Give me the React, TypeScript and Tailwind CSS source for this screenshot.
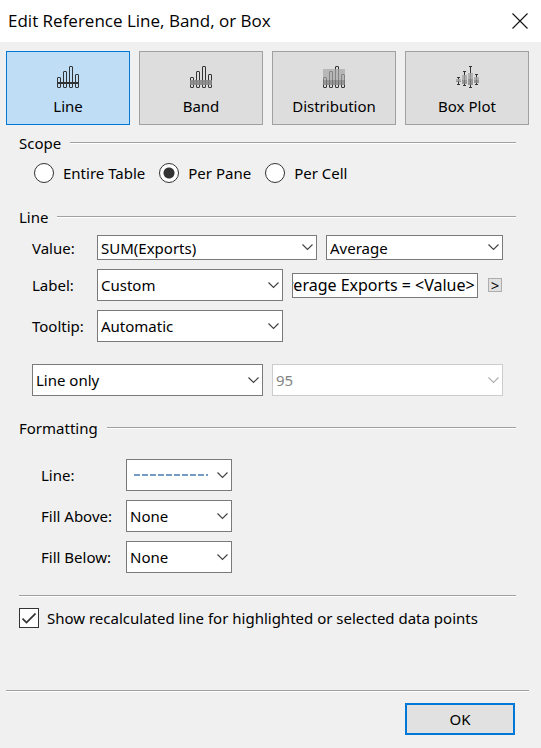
import { useEffect, useRef, useState } from "react";
import type { ReactNode } from "react";

const BARS = [
  { x: 0, top: 11 },
  { x: 6, top: 5 },
  { x: 12, top: 0 },
  { x: 18, top: 8 },
];

function Bars() {
  return (
    <>
      {BARS.map((b) => (
        <rect
          key={b.x}
          x={b.x + 0.5}
          y={b.top + 0.5}
          width="3"
          height={21 - b.top}
          rx="0.5"
          fill="none"
          stroke="#333"
        />
      ))}
    </>
  );
}

function LineIcon() {
  return (
    <svg width="22" height="22" viewBox="0 0 22 22" aria-hidden="true">
      <Bars />
      <rect x="0" y="16" width="22" height="2" fill="#333" />
    </svg>
  );
}

function BandIcon() {
  return (
    <svg width="22" height="22" viewBox="0 0 22 22" aria-hidden="true">
      <Bars />
      <rect x="0" y="14" width="22" height="5" fill="#868686" fillOpacity="0.88" />
    </svg>
  );
}

function DistributionIcon() {
  return (
    <svg width="22" height="22" viewBox="0 0 22 22" aria-hidden="true">
      <Bars />
      <rect x="0" y="3" width="22" height="11" fill="#a6a6a6" fillOpacity="0.7" />
      <rect x="0" y="14" width="22" height="5" fill="#868686" fillOpacity="0.8" />
    </svg>
  );
}

const BOXES = [
  { x: 0, top: 11, bottom: 19, boxTop: 13, mid: 15, boxBottom: 16 },
  { x: 6, top: 5, bottom: 20, boxTop: 9, mid: 14, boxBottom: 18 },
  { x: 12, top: 0, bottom: 22, boxTop: 7, mid: 13, boxBottom: 19 },
  { x: 18, top: 8, bottom: 19, boxTop: 11, mid: 14, boxBottom: 17 },
];

function BoxPlotIcon() {
  return (
    <svg width="23" height="22" viewBox="0 0 23 22" aria-hidden="true">
      {BOXES.map((b) => (
        <g key={b.x}>
          <rect x={b.x + 2} y={b.top} width="1" height={b.bottom - b.top} fill="#333" />
          <rect x={b.x} y={b.boxTop} width="5" height={b.mid - b.boxTop} fill="#a6a6a6" fillOpacity="0.8" />
          <rect x={b.x} y={b.mid} width="5" height={b.boxBottom - b.mid} fill="#868686" fillOpacity="0.8" />
          <rect x={b.x + 1} y={b.top} width="3" height="1" fill="#333" />
          <rect x={b.x + 1} y={b.bottom - 1} width="3" height="1" fill="#333" />
        </g>
      ))}
    </svg>
  );
}

const TABS = [
  { name: "Line", icon: <LineIcon /> },
  { name: "Band", icon: <BandIcon /> },
  { name: "Distribution", icon: <DistributionIcon /> },
  { name: "Box Plot", icon: <BoxPlotIcon /> },
];

function Rule() {
  return <div className="h-[2px] flex-1 border-t border-[#a0a0a0] bg-white" />;
}

function SectionTitle({ children }: { children: ReactNode }) {
  return (
    <div className="flex h-5 items-center gap-[9px]">
      <h2>{children}</h2>
      <Rule />
    </div>
  );
}

type SelectProps = {
  id?: string;
  label?: string;
  options: string[];
  short?: boolean;
  disabled?: boolean;
  dashed?: boolean;
};

function Select({ id, label, options, short, disabled, dashed }: SelectProps) {
  return (
    <div className="relative min-w-0">
      <select
        id={id}
        aria-label={label}
        disabled={disabled}
        className={`block w-full appearance-none rounded-none border bg-white pr-5 pl-[3px] opacity-100 outline-none ${
          short ? "h-[25px]" : "h-8"
        } ${disabled ? "border-[#cccccc] text-[#838383]" : "border-[#7a7a7a]"} ${
          dashed ? "text-transparent" : ""
        }`}
      >
        {options.map((o) => (
          <option key={o}>{o}</option>
        ))}
      </select>
      {dashed && (
        <svg
          className="pointer-events-none absolute top-[15px] left-2"
          width="74"
          height="2"
          viewBox="0 0 74 2"
          aria-hidden="true"
        >
          <path d="M0 1H74" stroke="#759cc4" strokeWidth="2" strokeDasharray="6 2" />
        </svg>
      )}
      <svg
        className="pointer-events-none absolute inset-y-0 right-1 my-auto"
        width="11"
        height="7"
        viewBox="0 0 11 7"
        fill="none"
        stroke={disabled ? "#b0b0b0" : "#444"}
        strokeWidth="1.2"
        aria-hidden="true"
      >
        <path d="M0.5 0.5L5.5 5.5L10.5 0.5" />
      </svg>
    </div>
  );
}

const SCOPES = ["Entire Table", "Per Pane", "Per Cell"];

export default function App() {
  const [tab, setTab] = useState("Line");
  const labelText = useRef<HTMLInputElement>(null);

  // Long label text shows its end, where typing would continue.
  useEffect(() => {
    if (labelText.current) labelText.current.scrollLeft = labelText.current.scrollWidth;
  }, []);

  return (
    <div className="min-h-screen bg-[#f0f0f0] font-['Noto_Sans',sans-serif] text-[15px] leading-5 text-black">
      <header className="flex h-[42px] items-center justify-between bg-white pr-3 pl-2">
        <h1 className="font-['Open_Sans','Noto_Sans',sans-serif] text-[17px]">
          Edit Reference Line, Band, or Box
        </h1>
        <button type="button" aria-label="Close" className="p-px">
          <svg width="16" height="16" viewBox="0 0 16 16" stroke="#111" strokeWidth="1.1" aria-hidden="true">
            <path d="M0.5 0.5L15.5 15.5M15.5 0.5L0.5 15.5" />
          </svg>
        </button>
      </header>

      <nav className="mt-[9px] mr-3 ml-[6px] grid grid-cols-4 gap-[9px]">
        {TABS.map((t) => (
          <button
            key={t.name}
            type="button"
            aria-pressed={tab === t.name}
            onClick={() => setTab(t.name)}
            className={`flex h-[74px] flex-col items-center gap-2 border pt-[14px] ${
              tab === t.name ? "border-[#0078d7] bg-[#bfddf5]" : "border-[#a0a0a0] bg-[#dddddd]"
            }`}
          >
            {t.icon}
            {t.name}
          </button>
        ))}
      </nav>

      <main className="mr-[25px] ml-[19px]">
        <section className="pt-2">
          <SectionTitle>Scope</SectionTitle>
          <div className="mt-[10px] ml-[15px] flex gap-[14px]">
            {SCOPES.map((s) => (
              <label key={s} className="flex items-center gap-[9px]">
                <input
                  type="radio"
                  name="scope"
                  defaultChecked={s === "Per Pane"}
                  className="size-5 appearance-none rounded-full border border-[#333] bg-white checked:bg-[radial-gradient(circle,#333_5px,#fff_6px)]"
                />
                {s}
              </label>
            ))}
          </div>
        </section>

        <section className="pt-6">
          <SectionTitle>Line</SectionTitle>
          <div className="mt-2 mr-[13px] ml-[13px] grid grid-cols-[56px_1fr] items-center gap-x-[9px] gap-y-[9px]">
            <label htmlFor="value">Value:</label>
            <div className="grid grid-cols-[220fr_177fr] gap-[9px]">
              <Select id="value" options={["SUM(Exports)"]} short />
              <Select label="Aggregation" options={["Average", "Median", "Minimum", "Maximum"]} short />
            </div>
            <label htmlFor="label">Label:</label>
            <div className="grid grid-cols-[1fr_1fr_16px] items-center gap-[9px]">
              <Select id="label" options={["Custom", "None", "Value", "Computation"]} />
              <input
                ref={labelText}
                type="text"
                aria-label="Label text"
                defaultValue="Average Exports = <Value>"
                className="h-[25px] w-full min-w-0 border border-[#7a7a7a] bg-white pr-[2px] text-base outline-none"
              />
              <button
                type="button"
                aria-label="Insert field"
                className="flex size-[14px] items-center justify-center justify-self-center border border-[#adadad] bg-[#e1e1e1] leading-3"
              >
                &gt;
              </button>
            </div>
            <label htmlFor="tooltip">Tooltip:</label>
            <div className="grid grid-cols-[1fr_1fr_16px] gap-[9px]">
              <Select id="tooltip" options={["Automatic", "None", "Custom"]} />
            </div>
          </div>
          <div className="mt-[22px] mr-[13px] ml-[13px] grid grid-cols-2 gap-[9px]">
            <Select label="Line display" options={["Line only", "With confidence"]} />
            <Select label="Confidence level" options={["95"]} disabled />
          </div>
        </section>

        <section className="pt-[22px]">
          <SectionTitle>Formatting</SectionTitle>
          <div className="mt-[21px] ml-[22px] grid grid-cols-[76px_106px] items-center gap-x-[9px] gap-y-[9px] whitespace-nowrap">
            <label htmlFor="line-style">Line:</label>
            <Select id="line-style" options={["Dashed", "Solid"]} dashed />
            <label htmlFor="fill-above">Fill Above:</label>
            <Select id="fill-above" options={["None"]} />
            <label htmlFor="fill-below">Fill Below:</label>
            <Select id="fill-below" options={["None"]} />
          </div>
        </section>

        <section className="pt-[22px]">
          <div className="flex">
            <Rule />
          </div>
          <label className="mt-[11px] flex items-center gap-2 whitespace-nowrap">
            <span className="relative size-5">
              <input
                type="checkbox"
                defaultChecked
                className="peer block size-5 appearance-none border border-[#333] bg-white"
              />
              <svg
                className="pointer-events-none invisible absolute top-[5px] left-[3px] peer-checked:visible"
                width="14"
                height="11"
                viewBox="0 0 14 11"
                fill="none"
                stroke="#333"
                strokeWidth="1.7"
                aria-hidden="true"
              >
                <path d="M0.5 5.5L4.5 9.5L13.5 0.5" />
              </svg>
            </span>
            Show recalculated line for highlighted or selected data points
          </label>
        </section>
      </main>

      <footer className="mt-[62px] mr-3 ml-[6px]">
        <div className="flex">
          <Rule />
        </div>
        <div className="flex justify-end pt-[11px] pr-[14px] pb-3">
          <button type="button" className="h-8 w-[110px] border-2 border-[#0078d7] bg-[#e1e1e1]">
            OK
          </button>
        </div>
      </footer>
    </div>
  );
}
